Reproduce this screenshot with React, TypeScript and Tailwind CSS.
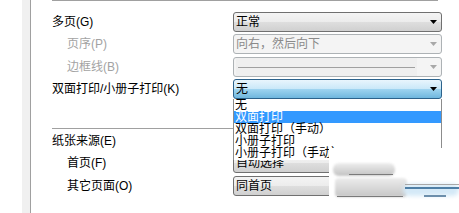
import React from 'react';

type ComboKind = 'normal' | 'disabled' | 'focused';

const Arrow = ({ color }: { color: string }) => (
  <svg width="7" height="4" viewBox="0 0 7 4" className="shrink-0">
    <polygon points="0,0 7,0 3.5,4" fill={color} />
  </svg>
);

const Combo = ({
  kind = 'normal',
  text,
  children,
}: {
  kind?: ComboKind;
  text?: string;
  children?: React.ReactNode;
}) => {
  const box =
    kind === 'disabled'
      ? 'border-[#adb2b5] bg-[#f4f4f4] text-[#8a8a8a]'
      : kind === 'focused'
      ? 'border-[#2c628b] bg-[linear-gradient(#e8f5fd_0%,#c9e8f8_50%,#9fd4f0_51%,#6fb7de_100%)] text-black'
      : 'border-[#707070] bg-[linear-gradient(#f4f4f4_0%,#ececec_50%,#dedede_51%,#d0d0d0_100%)] text-black';
  return (
    <div className={`relative flex h-full w-[209px] items-center rounded-[3px] border pl-[2px] pr-[4px] ${box}`}>
      <div className="flex-1 min-w-0 whitespace-nowrap leading-none">{children ?? text}</div>
      <Arrow color={kind === 'disabled' ? '#a8a8a8' : '#000'} />
    </div>
  );
};

const Row = ({
  label,
  indent,
  muted,
  className = '',
  children,
}: {
  label: string;
  indent?: boolean;
  muted?: boolean;
  className?: string;
  children?: React.ReactNode;
}) => (
  <div className={`flex h-[20px] items-center ${className}`}>
    <div
      className={`w-[181px] whitespace-nowrap ${indent ? 'pl-[15px]' : ''} ${
        muted ? 'text-[#a3a3a3]' : 'text-black'
      }`}
    >
      {label}
    </div>
    {children}
  </div>
);

const duplexOptions = ['无', '双面打印', '双面打印（手动）', '小册子打印', '小册子打印（手动）'];

export default function App() {
  return (
    <div className="relative flex h-[213px] w-[459px] overflow-hidden bg-white text-[12px] font-['Liberation_Sans','Noto_Sans_CJK_SC',sans-serif]">
      <div className="w-[22px] shrink-0" />
      <div className="w-[8px] shrink-0 bg-[#f0f0f0]" />
      <div className="w-px shrink-0 bg-[#a0a0a0]" />

      <div className="flex flex-1 flex-col pl-[21px]">
        <div className="h-px w-[386px] bg-[#a0a0a0]" />

        <Row label="多页(G)" className="mt-[11px]">
          <Combo text="正常" />
        </Row>
        <Row label="页序(P)" indent muted className="mt-[2px]">
          <Combo kind="disabled" text="向右，然后向下" />
        </Row>
        <Row label="边框线(B)" indent muted className="mt-[3px]">
          <Combo kind="disabled">
            <div className="mr-[13px] flex h-[18px] items-center bg-[#efefef] px-[2px]">
              <div className="h-px w-full bg-[#a0a0a0]" />
            </div>
          </Combo>
        </Row>
        <Row label="双面打印/小册子打印(K)" className="relative z-10 mt-[2px]">
          <div className="relative h-full">
            <Combo kind="focused" text="无" />
            {/* open drop-down list */}
            <div className="absolute left-0 top-full flex h-[61px] w-[209px] flex-col overflow-hidden border-x border-[#8c8c8c] bg-white">
              {duplexOptions.map((o, i) => (
                <div
                  key={o}
                  className={`flex h-[12px] shrink-0 items-center whitespace-nowrap pl-px leading-none ${
                    i === 1 ? 'bg-[#3399ff] text-white' : 'text-black'
                  }`}
                >
                  {o}
                </div>
              ))}
            </div>
          </div>
        </Row>

        <div className="mt-[29px] h-px w-[386px] bg-[#a0a0a0]" />

        <Row label="纸张来源(E)" className="mt-[2px]" />
        <Row label="首页(F)" indent className="mt-[2px]">
          <Combo text="自动选择" />
        </Row>
        <Row label="其它页面(O)" indent className="mt-[3px]">
          <Combo text="同首页" />
        </Row>
      </div>

      {/* smeared watermark over the lower right */}
      <div className="absolute left-[329px] top-[148px] z-20 h-[65px] w-[130px] bg-white">
        <div className="absolute left-[4px] top-[15px] h-[13px] w-[62px] rounded-[6px] bg-[linear-gradient(#eeeeee,#c2c2c2)] blur-[1px]" />
        <div className="absolute left-[20px] top-[26px] h-px w-[44px] bg-[#7a7a7a]" />
        <div className="absolute left-[6px] top-[30px] h-[19px] w-[72px] rounded-[4px] bg-[linear-gradient(#ececec,#c6c6c6)] blur-[1px]" />
        <div className="absolute left-[8px] top-[48px] h-px w-[66px] bg-[#7a7a7a]" />
        <div className="absolute left-[74px] top-[36px] h-[12px] w-[56px] rounded-full bg-[#d4e9f7] blur-[2px]" />
        <div className="absolute left-[76px] top-[39px] h-[2px] w-[54px] bg-[#4e7fa6] blur-[0.5px]" />
        <div className="absolute left-[76px] top-[36px] h-px w-[54px] bg-[#a8a8a8]" />
        <div className="absolute left-[95px] top-[47px] h-[2px] w-[22px] bg-[#6b8eab] blur-[0.5px]" />
      </div>
    </div>
  );
}
